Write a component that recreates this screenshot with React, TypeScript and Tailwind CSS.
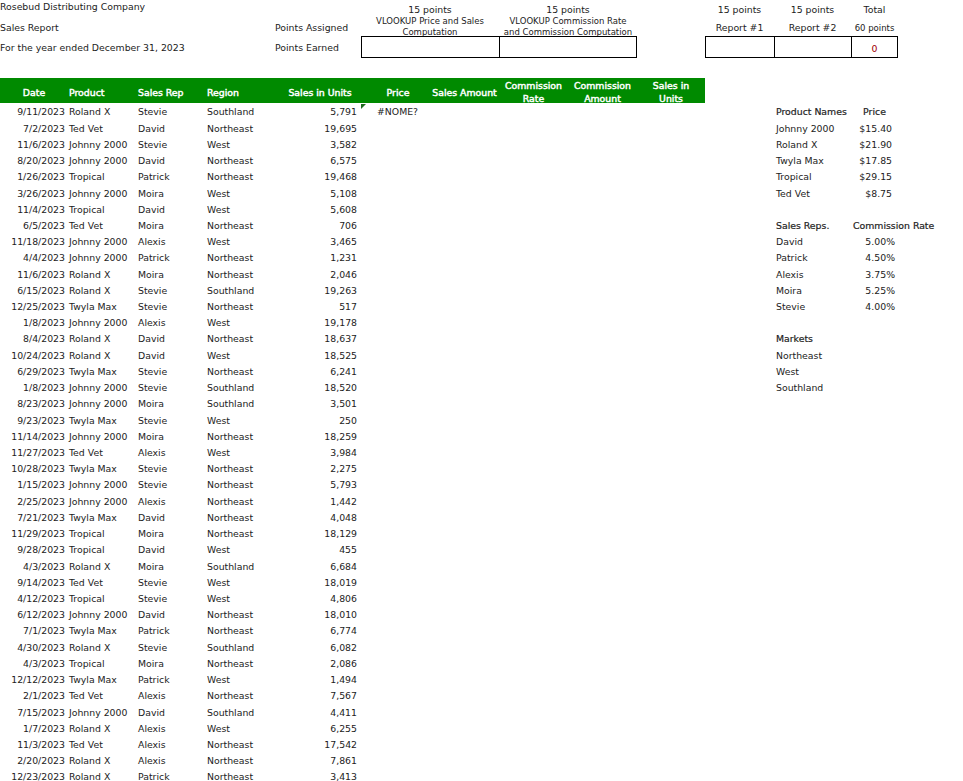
import React from 'react';

const rows = `9/11/2023|Roland X|Stevie|Southland|5,791
7/2/2023|Ted Vet|David|Northeast|19,695
11/6/2023|Johnny 2000|Stevie|West|3,582
8/20/2023|Johnny 2000|David|Northeast|6,575
1/26/2023|Tropical|Patrick|Northeast|19,468
3/26/2023|Johnny 2000|Moira|West|5,108
11/4/2023|Tropical|David|West|5,608
6/5/2023|Ted Vet|Moira|Northeast|706
11/18/2023|Johnny 2000|Alexis|West|3,465
4/4/2023|Johnny 2000|Patrick|Northeast|1,231
11/6/2023|Roland X|Moira|Northeast|2,046
6/15/2023|Roland X|Stevie|Southland|19,263
12/25/2023|Twyla Max|Stevie|Northeast|517
1/8/2023|Johnny 2000|Alexis|West|19,178
8/4/2023|Roland X|David|Northeast|18,637
10/24/2023|Roland X|David|West|18,525
6/29/2023|Twyla Max|Stevie|Northeast|6,241
1/8/2023|Johnny 2000|Stevie|Southland|18,520
8/23/2023|Johnny 2000|Moira|Southland|3,501
9/23/2023|Twyla Max|Stevie|West|250
11/14/2023|Johnny 2000|Moira|Northeast|18,259
11/27/2023|Ted Vet|Alexis|West|3,984
10/28/2023|Twyla Max|Stevie|Northeast|2,275
1/15/2023|Johnny 2000|Stevie|Northeast|5,793
2/25/2023|Johnny 2000|Alexis|Northeast|1,442
7/21/2023|Twyla Max|David|Northeast|4,048
11/29/2023|Tropical|Moira|Northeast|18,129
9/28/2023|Tropical|David|West|455
4/3/2023|Roland X|Moira|Southland|6,684
9/14/2023|Ted Vet|Stevie|West|18,019
4/12/2023|Tropical|Stevie|West|4,806
6/12/2023|Johnny 2000|David|Northeast|18,010
7/1/2023|Twyla Max|Patrick|Northeast|6,774
4/30/2023|Roland X|Stevie|Southland|6,082
4/3/2023|Tropical|Moira|Northeast|2,086
12/12/2023|Twyla Max|Patrick|West|1,494
2/1/2023|Ted Vet|Alexis|Northeast|7,567
7/15/2023|Johnny 2000|David|Southland|4,411
1/7/2023|Roland X|Alexis|West|6,255
11/3/2023|Ted Vet|Alexis|Northeast|17,542
2/20/2023|Roland X|Alexis|Northeast|7,861
12/23/2023|Roland X|Patrick|Northeast|3,413`
  .split('\n')
  .map((line) => line.split('|'));

const headStroke = '[-webkit-text-stroke:0.2px_#222]';

// side lookup tables share the row grid of the main table
const side: { name: string; value?: string; valueClass?: string; head?: boolean }[] = [
  { name: 'Product Names', value: 'Price', valueClass: `text-center ${headStroke}`, head: true },
  { name: 'Johnny 2000', value: '$15.40', valueClass: 'pr-[6px] text-right' },
  { name: 'Roland X', value: '$21.90', valueClass: 'pr-[6px] text-right' },
  { name: 'Twyla Max', value: '$17.85', valueClass: 'pr-[6px] text-right' },
  { name: 'Tropical', value: '$29.15', valueClass: 'pr-[6px] text-right' },
  { name: 'Ted Vet', value: '$8.75', valueClass: 'pr-[6px] text-right' },
  { name: '' },
  { name: 'Sales Reps.', value: 'Commission Rate', valueClass: `pl-[2px] ${headStroke}`, head: true },
  { name: 'David', value: '5.00%', valueClass: 'pr-[3px] text-right' },
  { name: 'Patrick', value: '4.50%', valueClass: 'pr-[3px] text-right' },
  { name: 'Alexis', value: '3.75%', valueClass: 'pr-[3px] text-right' },
  { name: 'Moira', value: '5.25%', valueClass: 'pr-[3px] text-right' },
  { name: 'Stevie', value: '4.00%', valueClass: 'pr-[3px] text-right' },
  { name: '' },
  { name: 'Markets', head: true },
  { name: 'Northeast' },
  { name: 'West' },
  { name: 'Southland' },
];

const cols = 'grid grid-cols-[68px_69px_69px_69px_86px_69px_69px_69px_69px_68px_69px_77px_47px]';

const App = () => {
  return (
    <div className="h-[781px] w-[963px] overflow-hidden bg-white font-['DejaVu_Sans',sans-serif] text-[9.33px] leading-[12px] text-[#222]">
      {/* Title and points block */}
      <div className={`${cols} grid-rows-[17px_19px_22px]`}>
        <div className="col-span-5 pt-px whitespace-nowrap">Rosebud Distributing Company</div>
        <div className="col-span-2 pt-1 text-center">15 points</div>
        <div className="col-span-2 pt-1 text-center">15 points</div>
        <div />
        <div className="pt-1 text-center">15 points</div>
        <div className="pt-1 text-center">15 points</div>
        <div className="pt-1 text-center">Total</div>

        <div className="col-span-4 pt-[5px] whitespace-nowrap">Sales Report</div>
        <div className="pt-[5px] whitespace-nowrap">Points Assigned</div>
        <div className="col-span-2 -mt-px text-center text-[8.5px] leading-[10.5px]">VLOOKUP Price and Sales Computation</div>
        <div className="col-span-2 -mt-px text-center text-[8.5px] leading-[10.5px] whitespace-nowrap">
          VLOOKUP Commission Rate
          <br />
          and Commission Computation
        </div>
        <div />
        <div className="pt-[5px] text-center">Report #1</div>
        <div className="pt-[5px] text-center">Report #2</div>
        <div className="pt-[5px] text-center text-[8.5px]">60 points</div>

        <div className="col-span-4 flex items-center pt-px whitespace-nowrap">For the year ended December 31, 2023</div>
        <div className="flex items-center pt-px whitespace-nowrap">Points Earned</div>
        <div className="col-span-2 border border-r-0 border-black" />
        <div className="col-span-2 border border-black" />
        <div />
        <div className="border border-r-0 border-black" />
        <div className="border border-r-0 border-black" />
        <div className="flex items-center justify-center border border-black pt-[3px] text-[#a00000]">0</div>
      </div>

      {/* Green header */}
      <div className="mt-5 grid h-[25px] w-[705px] grid-cols-[68px_69px_69px_69px_86px_69px_69px_69px_69px_68px] items-center bg-[#008a00] pt-px text-center leading-[13px] text-white [-webkit-text-stroke:0.45px_white]">
        <div>Date</div>
        <div className="pl-px text-left">Product</div>
        <div className="pl-px text-left">Sales Rep</div>
        <div className="pl-px text-left">Region</div>
        <div className="pl-1 whitespace-nowrap">Sales in Units</div>
        <div className="pl-[5px]">Price</div>
        <div className="whitespace-nowrap">Sales Amount</div>
        <div>
          Commission
          <br />
          Rate
        </div>
        <div>
          Commission
          <br />
          Amount
        </div>
        <div>
          Sales in
          <br />
          Units
        </div>
      </div>

      {/* Body */}
      <div className="mt-[1.3px] flex">
        <div className="w-[705px] shrink-0">
          {rows.map((r, i) => (
            <div key={i} className="grid h-[16.22px] grid-cols-[68px_69px_69px_69px_86px_69px] items-center whitespace-nowrap">
              <div className="pr-[3px] text-right">{r[0]}</div>
              <div className="pl-px">{r[1]}</div>
              <div className="pl-px">{r[2]}</div>
              <div className="pl-px">{r[3]}</div>
              <div className="pr-1 text-right">{r[4]}</div>
              <div className="relative pl-4">
                {i === 0 && (
                  <>
                    <span className="absolute left-0 top-[-2px] h-0 w-0 border-t-[5px] border-r-[5px] border-t-[#1f6b1f] border-r-transparent" />
                    #NOME?
                  </>
                )}
              </div>
            </div>
          ))}
        </div>
        <div>
          {side.map((s, i) => (
            <div key={i} className="grid h-[16.22px] grid-cols-[146px_47px] items-center whitespace-nowrap">
              <div className={`pl-[71px] ${s.head ? headStroke : ''}`}>{s.name}</div>
              <div className={s.valueClass}>{s.value}</div>
            </div>
          ))}
        </div>
      </div>
    </div>
  );
};

export default App;
